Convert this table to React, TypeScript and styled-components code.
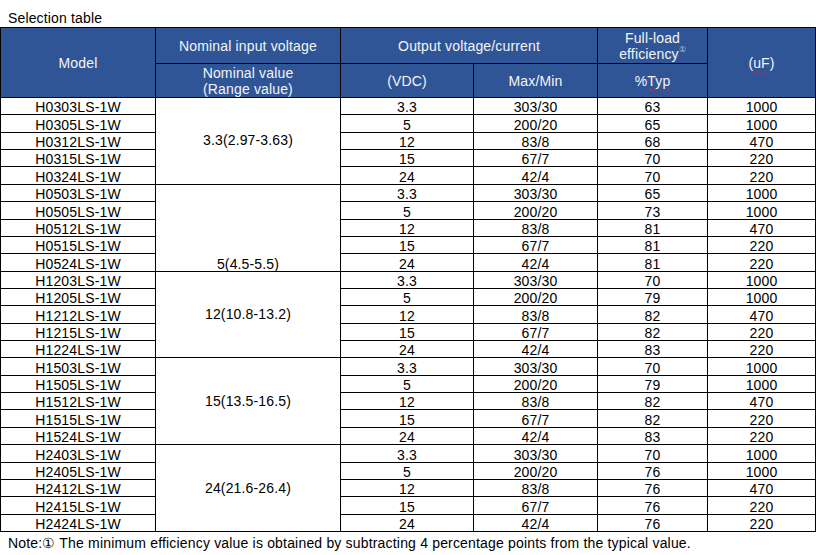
import React from 'react';
import styled, { createGlobalStyle } from 'styled-components';

const GlobalStyle = createGlobalStyle`
  html, body {
    margin: 0;
    padding: 0;
    background: #fff;
  }
  body {
    font-family: "Liberation Sans", Arial, sans-serif;
    color: #000;
  }
`;

const Page = styled.div`
  width: 816px;
`;

const Title = styled.div`
  font-size: 14px;
  line-height: 16px;
  letter-spacing: 0.15px;
  padding: 10px 0 1px 8px;
`;

const Table = styled.table`
  width: 815px;
  border-collapse: collapse;
  table-layout: fixed;
  font-size: 14px;
  letter-spacing: 0.15px;
  border: 1px solid #000;
`;

const HeadCell = styled.th<{ $h?: number }>`
  background: #2f5597;
  color: #f4f4f4;
  font-weight: normal;
  border: 1px solid #000;
  text-align: center;
  vertical-align: middle;
  padding: 0;
  line-height: 16px;
  height: ${p => (p.$h ? `${p.$h}px` : 'auto')};
`;

const Cell = styled.td<{ $valign?: 'middle' | 'bottom' }>`
  border: 1px solid #000;
  text-align: center;
  vertical-align: ${p => p.$valign || 'bottom'};
  padding: 0;
  line-height: 13px;
  height: 16.36px;
  white-space: nowrap;
`;

const Sup = styled.sup`
  font-size: 8px;
  color: #c8c8c8;
  vertical-align: 7px;
  line-height: 0;
`;

const Squiggle = styled.span`
  text-decoration: underline wavy #e02020;
  text-decoration-thickness: 1px;
  text-underline-offset: 2px;
`;

const Note = styled.div`
  font-size: 14px;
  line-height: 16px;
  letter-spacing: 0.18px;
  padding: 3px 0 0 8px;
`;

type Row = { model: string; vout: string; cur: string; eff: number; cap: number };
type Group = { input: string; valign: 'middle' | 'bottom'; rows: Row[] };

const base = [
  { suffix: '03', vout: '3.3', cur: '303/30' },
  { suffix: '05', vout: '5', cur: '200/20' },
  { suffix: '12', vout: '12', cur: '83/8' },
  { suffix: '15', vout: '15', cur: '67/7' },
  { suffix: '24', vout: '24', cur: '42/4' },
];
const caps = [1000, 1000, 470, 220, 220];

const makeGroup = (prefix: string, input: string, effs: number[], valign: 'middle' | 'bottom' = 'middle'): Group => ({
  input,
  valign,
  rows: base.map((b, i) => ({
    model: `H${prefix}${b.suffix}LS-1W`,
    vout: b.vout,
    cur: b.cur,
    eff: effs[i],
    cap: caps[i],
  })),
});

const groups: Group[] = [
  makeGroup('03', '3.3(2.97-3.63)', [63, 65, 68, 70, 70]),
  makeGroup('05', '5(4.5-5.5)', [65, 73, 81, 81, 81], 'bottom'),
  makeGroup('12', '12(10.8-13.2)', [70, 79, 82, 82, 83]),
  makeGroup('15', '15(13.5-16.5)', [70, 79, 82, 82, 83]),
  makeGroup('24', '24(21.6-26.4)', [70, 76, 76, 76, 76]),
];

const App: React.FC = () => {
  return (
    <Page>
      <GlobalStyle />
      <Title>Selection table</Title>
      <Table>
        <colgroup>
          <col style={{ width: 155 }} />
          <col style={{ width: 185 }} />
          <col style={{ width: 133 }} />
          <col style={{ width: 124 }} />
          <col style={{ width: 110 }} />
          <col style={{ width: 108 }} />
        </colgroup>
        <thead>
          <tr>
            <HeadCell rowSpan={2}>Model</HeadCell>
            <HeadCell $h={35}>Nominal input voltage</HeadCell>
            <HeadCell colSpan={2}>Output voltage/current</HeadCell>
            <HeadCell>
              Full-load
              <br />
              efficiency<Sup>①</Sup>
            </HeadCell>
            <HeadCell rowSpan={2}>
              (<Squiggle>uF</Squiggle>)
            </HeadCell>
          </tr>
          <tr>
            <HeadCell $h={33}>
              Nominal value
              <br />
              (Range value)
            </HeadCell>
            <HeadCell>(VDC)</HeadCell>
            <HeadCell>Max/Min</HeadCell>
            <HeadCell>
              %<Squiggle>Typ</Squiggle>
            </HeadCell>
          </tr>
        </thead>
        <tbody>
          {groups.map(g =>
            g.rows.map((r, i) => (
              <tr key={r.model}>
                <Cell>{r.model}</Cell>
                {i === 0 && (
                  <Cell rowSpan={5} $valign={g.valign}>
                    {g.input}
                  </Cell>
                )}
                <Cell>{r.vout}</Cell>
                <Cell>{r.cur}</Cell>
                <Cell>{r.eff}</Cell>
                <Cell>{r.cap}</Cell>
              </tr>
            ))
          )}
        </tbody>
      </Table>
      <Note>
        Note:① The minimum efficiency value is obtained by subtracting 4 percentage points from the typical value.
      </Note>
    </Page>
  );
};

export default App;
